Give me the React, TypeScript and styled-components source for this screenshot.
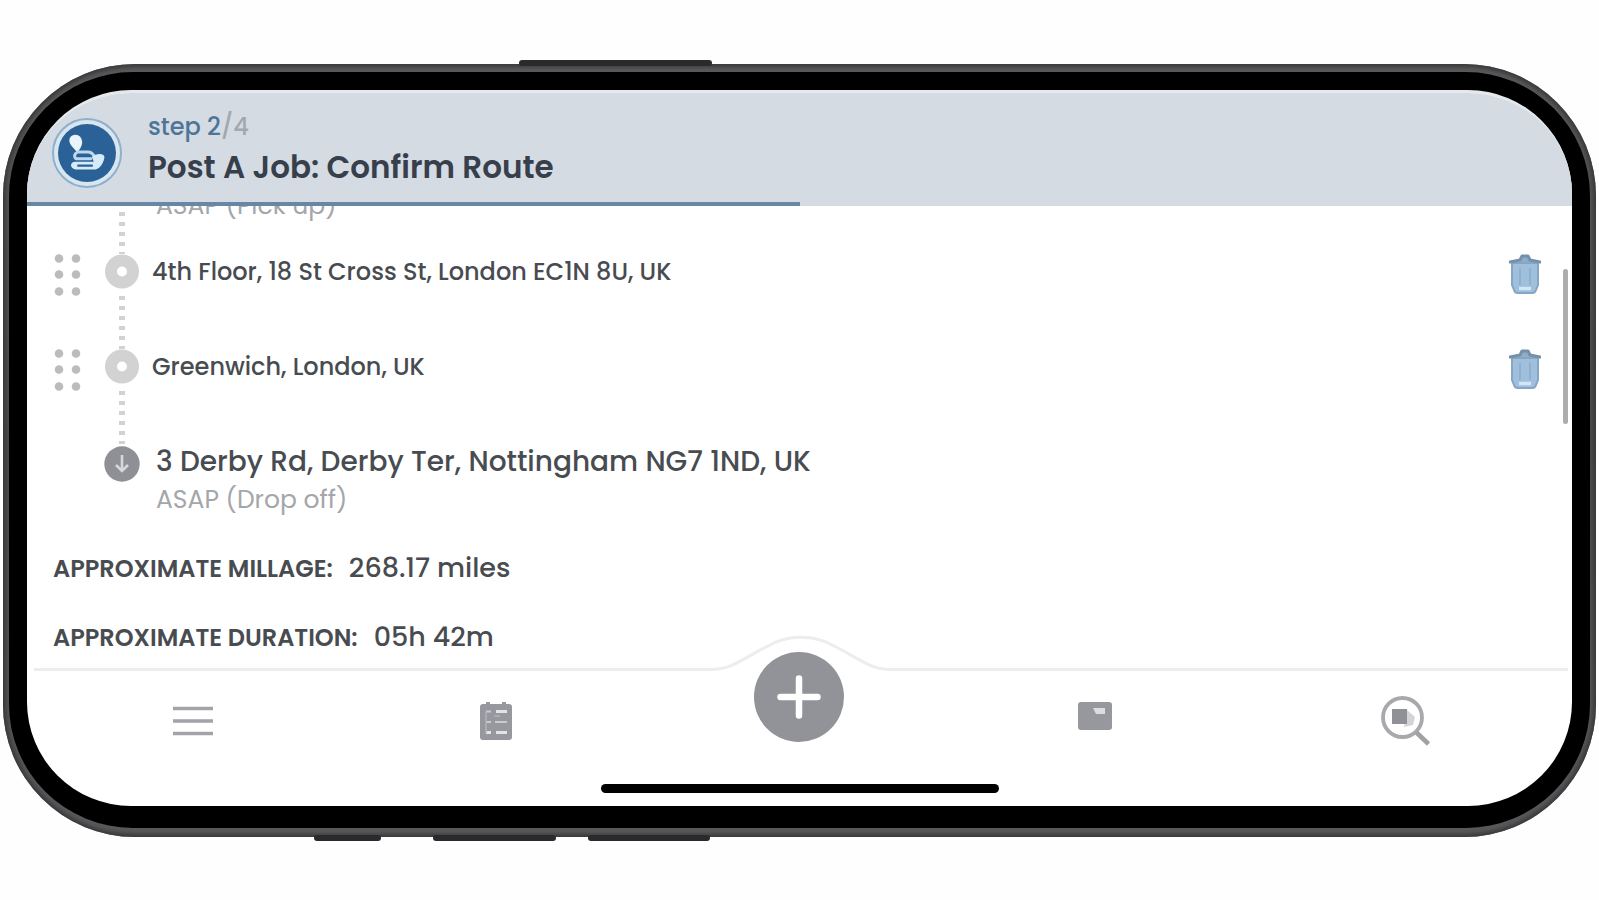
import React from "react";
import styled, { createGlobalStyle } from "styled-components";

const GlobalStyle = createGlobalStyle`
  * { box-sizing: border-box; }
  body {
    margin: 0;
    background: #fefefe;
    font-family: Poppins, Inter, "Liberation Sans", sans-serif;
    color: #484c51;
  }
  button { border: 0; padding: 0; background: none; font: inherit; cursor: pointer; }
  svg { display: block; }
`;

const Stage = styled.main`
  padding: 64px 3px 60px;
`;

const Phone = styled.div`
  position: relative;
  padding: 8px 6px 9px;
  border-radius: 132px;
  background: linear-gradient(#5a5a5c, #4a4a4d 50%, #5a5a5c);
  box-shadow: inset 0 0 4px 3px #39393b;
`;

const SideKey = styled.span<{ $side: "top" | "bottom"; $left: string; $width: string }>`
  position: absolute;
  ${(p) => p.$side}: -4px;
  left: ${(p) => p.$left};
  width: ${(p) => p.$width};
  height: 6px;
  border-radius: 3px;
  background: #2a2a2d;
`;

const Bezel = styled.div`
  padding: 18px 18px 22px;
  border-radius: 124px;
  background: #000;
`;

const Screen = styled.div`
  position: relative;
  display: flex;
  flex-direction: column;
  overflow: hidden;
  border-top: 3px solid #e6e9eb;
  border-radius: 104px;
  background: #fff;
`;

const Header = styled.header`
  display: flex;
  align-items: center;
  gap: 26px;
  height: 113px;
  padding: 6px 25px 0;
  background: #d4dbe2;
`;

const Badge = styled.span`
  display: grid;
  place-items: center;
  width: 70px;
  height: 70px;
  border: 2px solid #8db0cd;
  border-radius: 50%;
  background: #d9e5ef;
`;

const Headings = styled.div`
  display: flex;
  flex-direction: column;
  margin-bottom: 8px;
`;

const Step = styled.p`
  margin: 0;
  font-size: 24px;
  line-height: 36px;
  font-weight: 500;
  color: #4c7598;
  span { color: #a2a8ae; }
`;

const Title = styled.h1`
  margin: 0;
  font-size: 31px;
  line-height: 44px;
  font-weight: 600;
  color: #363f4b;
`;

const Progress = styled.progress`
  display: block;
  appearance: none;
  width: 100%;
  height: 4px;
  margin-top: -4px;
  border: 0;
  background: transparent;
  &::-webkit-progress-bar { background: transparent; }
  &::-webkit-progress-value { background: #6688a5; }
`;

const Content = styled.section`
  position: relative;
  height: 462px;
  overflow: hidden;
  padding: 0 31px 0 26px;
`;

const Stops = styled.ol`
  list-style: none;
  margin: 0;
  padding: 0;
`;

const Stop = styled.li<{ $height: number }>`
  display: grid;
  grid-template-columns: 28px 36px 1fr 36px;
  column-gap: 23px;
  height: ${(p) => p.$height}px;
`;

const Track = styled.span<{ $last?: boolean }>`
  display: flex;
  flex-direction: column;
  align-items: center;
  &::after {
    content: "";
    display: ${(p) => (p.$last ? "none" : "block")};
    flex: 1;
    width: 6px;
    background: repeating-linear-gradient(#fff 0 6px, #d2d2d2 6px 10px);
  }
`;

const Address = styled.span<{ $large?: boolean }>`
  margin-left: ${(p) => (p.$large ? -7 : -11)}px;
  font-size: ${(p) => (p.$large ? 28 : 24)}px;
  line-height: 36px;
  font-weight: 500;
  white-space: nowrap;
`;

const Note = styled.small`
  display: block;
  font-size: 25px;
  line-height: 40px;
  font-weight: 400;
  color: #a4a6aa;
`;

const PickUp = styled(Note)`
  margin-left: -7px;
  margin-top: -20px;
`;

const Remove = styled.button`
  justify-self: end;
  align-self: start;
`;

const Facts = styled.dl`
  margin: 0;
`;

const Fact = styled.div`
  display: flex;
  align-items: baseline;
  gap: 16px;
  height: 69px;
  line-height: 36px;
  dt { font-size: 24px; font-weight: 600; }
  dd { margin: 0; font-size: 27px; font-weight: 500; }
`;

const ScrollThumb = styled.span`
  position: absolute;
  top: 63px;
  right: 4px;
  width: 5px;
  height: 155px;
  border-radius: 3px;
  background: #adadad;
`;

const NavBar = styled.nav`
  position: relative;
  display: grid;
  grid-template-columns: repeat(5, 1fr);
  justify-items: center;
  align-items: center;
  height: 103px;
  padding: 3px 14px 0;
`;

const NavEdge = styled.div`
  position: absolute;
  top: -35px;
  left: 7px;
  right: 4px;
  display: flex;
  align-items: flex-end;
  height: 38px;
  &::before, &::after { content: ""; flex: 1; height: 3px; background: #ededee; }
`;

const NavButton = styled.button`
  position: relative;
`;

const AddButton = styled.button`
  position: relative;
  display: grid;
  place-items: center;
  width: 90px;
  height: 90px;
  margin-top: -48px;
  border-radius: 50%;
  background: #919399;
`;

const HomeIndicator = styled.div`
  width: 398px;
  height: 9px;
  margin: 13px auto;
  border-radius: 5px;
  background: #000;
`;

const RouteIcon = () => (
  <svg width="58" height="58" viewBox="0 0 60 60" aria-hidden="true">
    <circle cx="30" cy="30" r="30" fill="#2a6197" />
    <path d="M18 11c-5 0-7 4-6 8 1 4 5 6 8 11 3-5 5-7 5-11 0-5-3-8-7-8z" fill="#e9f4fb" />
    <path d="M20 29h11c4 0 5 2 8 6M19 30c-3 2-2 6 1 6h14" fill="none" stroke="#bcd8ec" strokeWidth="3" strokeLinecap="round" />
    <path d="M35 34c4-4 13-4 13 0 0 5-4 12-9 13H18c-6-1-6-8 0-8h19z" fill="#d6ebf8" />
    <path d="M20 43h16" stroke="#2a6197" strokeWidth="2.400" />
  </svg>
);

const GripIcon = () => (
  <svg width="28" height="46" viewBox="0 0 28 46" aria-hidden="true" fill="#bcbcbe">
    {[4.5, 20.5, 37.5].map((y) => (
      <React.Fragment key={y}>
        <circle cx="6" cy={y} r="4.3" />
        <circle cx="23" cy={y} r="4.3" />
      </React.Fragment>
    ))}
  </svg>
);

const RingIcon = () => (
  <svg width="36" height="36" viewBox="0 0 36 36" aria-hidden="true">
    <circle cx="18" cy="17.500" r="11" fill="#fff" stroke="#d2d2d3" strokeWidth="12" />
  </svg>
);

const DropIcon = () => (
  <svg width="36" height="38" viewBox="0 0 36 38" aria-hidden="true">
    <circle cx="18" cy="20" r="17.700" fill="#8f9096" />
    <path d="M18 11v16M12 21l6 6 6-6" fill="none" stroke="#d6d7da" strokeWidth="2.600" />
  </svg>
);

const TrashIcon = () => (
  <svg width="32" height="40" viewBox="0 0 32 40" aria-hidden="true">
    <path d="M3 9h26v22l-2 5a4 4 0 0 1-4 3H9a4 4 0 0 1-4-3l-2-5z" fill="#9fbfdd" stroke="#86a6c3" strokeWidth="2" />
    <path d="M1 8l10-2 2-4h6l2 4 10 2" fill="#8fadc8" stroke="#7590aa" strokeWidth="3" strokeLinejoin="round" strokeLinecap="round" />
    <path d="M11 14v17M21 14v17" stroke="#8fb1d0" strokeWidth="2" />
    <path d="M10 34.500h12" stroke="#d3e6f6" strokeWidth="3.400" />
  </svg>
);

const MenuIcon = () => (
  <svg width="42" height="30" viewBox="0 0 42 30" aria-hidden="true">
    <path d="M1 2.5h40M1 15h40M1 27.5h40" stroke="#a3a3a8" strokeWidth="3.6" />
  </svg>
);

const ListIcon = () => (
  <svg width="32" height="38" viewBox="0 0 32 38" aria-hidden="true">
    <path d="M3 2h3V0h4v2h12V0h4v2h3a3 3 0 0 1 3 3v30a3 3 0 0 1-3 3H3a3 3 0 0 1-3-3V5a3 3 0 0 1 3-3z" fill="#97989e" />
    <g fill="none" stroke="#c9cacf" strokeWidth="2">
      <path d="M6 9.500h5M6 20h5M15 20h12" />
      <path d="M16 9.500h11M6 30.500h5M16 30.500h11" stroke="#e2e3e6" strokeWidth="3" />
      <path d="M6 9v22M14 14h6" stroke="#b2b3ba" strokeWidth="1.500" />
    </g>
  </svg>
);

const CardIcon = () => (
  <svg width="50" height="38" viewBox="0 0 50 38" aria-hidden="true">
    <rect x="0" y="0" width="34" height="28" rx="3" fill="#96989d" />
    <path d="M15 6h12v6h-9z" fill="#dcdde0" />
  </svg>
);

const SearchIcon = () => (
  <svg width="50" height="50" viewBox="0 0 50 50" aria-hidden="true">
    <circle cx="21.500" cy="21.500" r="19.500" fill="none" stroke="#a8a9ad" strokeWidth="3.800" />
    <path d="M35.500 36.500l12 11.500" stroke="#a0a1a6" strokeWidth="4.600" />
    <path d="M26 14l8 7-2 8-9 2z" fill="#d4d4d8" />
    <rect x="11" y="13" width="15" height="15" fill="#909196" />
  </svg>
);

const waypoints = ["4th Floor, 18 St Cross St, London EC1N 8U, UK", "Greenwich, London, UK"];

const facts = [
  ["APPROXIMATE MILLAGE:", "268.17 miles"],
  ["APPROXIMATE DURATION:", "05h 42m"],
];

export default function App() {
  return (
    <>
      <GlobalStyle />
      <Stage>
        <Phone>
          <SideKey $side="top" $left="32.4%" $width="12.1%" />
          <SideKey $side="bottom" $left="19.5%" $width="4.2%" />
          <SideKey $side="bottom" $left="27%" $width="7.7%" />
          <SideKey $side="bottom" $left="36.7%" $width="7.7%" />
          <Bezel>
            <Screen>
              <Header>
                <Badge><RouteIcon /></Badge>
                <Headings>
                  <Step>step 2<span>/4</span></Step>
                  <Title>Post A Job: Confirm Route</Title>
                </Headings>
              </Header>
              <Progress value={2} max={4} aria-label="Step 2 of 4" />
              <Content>
                <Stops>
                  <Stop $height={48}>
                    <span />
                    <Track />
                    <PickUp>ASAP (Pick up)</PickUp>
                  </Stop>
                  {waypoints.map((name) => (
                    <Stop key={name} $height={95}>
                      <GripIcon />
                      <Track><RingIcon /></Track>
                      <Address>{name}</Address>
                      <Remove aria-label={`Remove ${name}`}><TrashIcon /></Remove>
                    </Stop>
                  ))}
                  <Stop $height={106}>
                    <span />
                    <Track $last><DropIcon /></Track>
                    <Address $large>
                      3 Derby Rd, Derby Ter, Nottingham NG7 1ND, UK
                      <Note>ASAP (Drop off)</Note>
                    </Address>
                  </Stop>
                </Stops>
                <Facts>
                  {facts.map(([label, value]) => (
                    <Fact key={label}>
                      <dt>{label}</dt>
                      <dd>{value}</dd>
                    </Fact>
                  ))}
                </Facts>
                <ScrollThumb />
              </Content>
              <NavBar aria-label="Main">
                <NavEdge>
                  <svg width="180" height="38" viewBox="0 0 180 38" aria-hidden="true">
                    <path d="M0 38V36.5C20 36.500 28 30 58 13C75 1 105 1 122 13C152 30 160 36.500 180 36.500V38z" fill="#fff" />
                    <path d="M0 36.500C20 36.500 28 28 55 14C76 1 104 1 125 14C152 28 160 36.500 180 36.500" fill="none" stroke="#ededee" strokeWidth="3" />
                  </svg>
                </NavEdge>
                <NavButton aria-label="Menu"><MenuIcon /></NavButton>
                <NavButton aria-label="Jobs"><ListIcon /></NavButton>
                <AddButton aria-label="Add">
                  <svg width="44" height="44" viewBox="0 0 44 44" aria-hidden="true">
                    <path d="M22 3.500v37M3.500 22h37" stroke="#fff" strokeWidth="6.500" strokeLinecap="round" />
                  </svg>
                </AddButton>
                <NavButton aria-label="Packages"><CardIcon /></NavButton>
                <NavButton aria-label="Search"><SearchIcon /></NavButton>
              </NavBar>
              <HomeIndicator />
            </Screen>
          </Bezel>
        </Phone>
      </Stage>
    </>
  );
}
